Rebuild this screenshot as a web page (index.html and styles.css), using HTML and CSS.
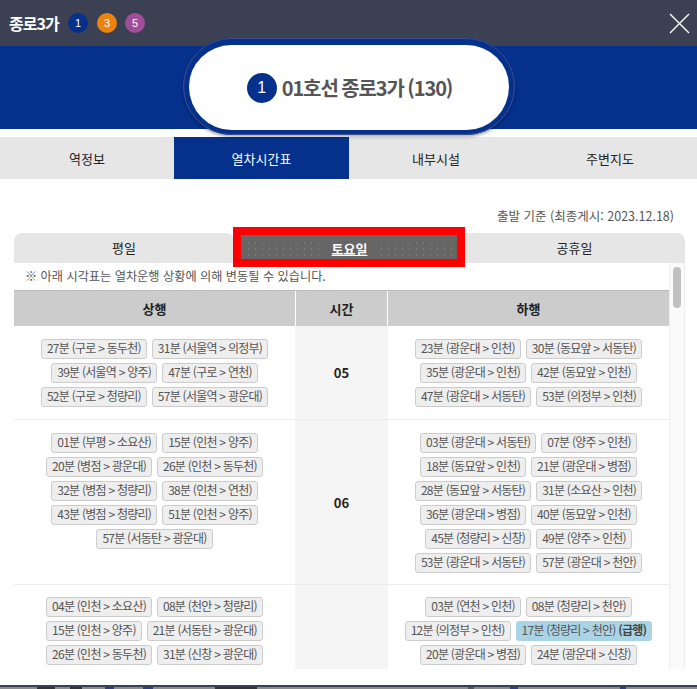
FILE: index.html
```html
<!DOCTYPE html>
<html lang="ko">

<head>
    <meta charset="UTF-8">
    <meta name="viewport" content="width=device-width, initial-scale=1.0">
    <title>종로3가</title>
    <link rel="stylesheet" href="styles.css">
</head>

<body>
    <div id="popup">
        <!-- Title bar -->
        <div id="title-bar">
            <h1 class="title">종로3가</h1>
            <span class="line-dot line1">1</span>
            <span class="line-dot line3">3</span>
            <span class="line-dot line5">5</span>
            <svg class="close" width="21" height="21" viewBox="0 0 21 21">
                <path d="M1 1L20 20M20 1L1 20" stroke="#fff" stroke-width="1.4" fill="none" />
            </svg>
        </div>

        <!-- Station name -->
        <div id="station-band">
            <div class="station-pill">
                <span class="pill-dot">1</span>
                <span class="pill-text">01호선 종로3가 (130)</span>
            </div>
        </div>

        <div id="main-tabs">
            <div class="main-tab">역정보</div>
            <div class="main-tab active">열차시간표</div>
            <div class="main-tab">내부시설</div>
            <div class="main-tab">주변지도</div>
        </div>

        <p class="base-date">출발 기준 (최종게시: 2023.12.18)</p>

        <div id="day-tabs">
            <div class="day-tab first">평일</div>
            <div class="day-tab selected"><div class="selected-inner"><span>토요일</span></div></div>
            <div class="day-tab last">공휴일</div>
        </div>

        <div id="timetable">
            <div class="scroll-area">
                <p class="notice">※ 아래 시각표는 열차운행 상황에 의해 변동될 수 있습니다.</p>

                <div class="table-head">
                    <div>상행</div>
                    <div>시간</div>
                    <div>하행</div>
                </div>

                <div class="hour-row">
                    <div class="trains">
                        <span class="chip">27분 (구로 &gt; 동두천)</span>
                        <span class="chip">31분 (서울역 &gt; 의정부)</span>
                        <span class="chip">39분 (서울역 &gt; 양주)</span>
                        <span class="chip">47분 (구로 &gt; 연천)</span>
                        <span class="chip">52분 (구로 &gt; 청량리)</span>
                        <span class="chip">57분 (서울역 &gt; 광운대)</span>
                    </div>
                    <div class="hour">05</div>
                    <div class="trains">
                        <span class="chip">23분 (광운대 &gt; 인천)</span>
                        <span class="chip">30분 (동묘앞 &gt; 서동탄)</span>
                        <span class="chip">35분 (광운대 &gt; 인천)</span>
                        <span class="chip">42분 (동묘앞 &gt; 인천)</span>
                        <span class="chip">47분 (광운대 &gt; 서동탄)</span>
                        <span class="chip">53분 (의정부 &gt; 인천)</span>
                    </div>
                </div>

                <div class="hour-row long">
                    <div class="trains">
                        <span class="chip">01분 (부평 &gt; 소요산)</span>
                        <span class="chip">15분 (인천 &gt; 양주)</span>
                        <span class="chip">20분 (병점 &gt; 광운대)</span>
                        <span class="chip">26분 (인천 &gt; 동두천)</span>
                        <span class="chip">32분 (병점 &gt; 청량리)</span>
                        <span class="chip">38분 (인천 &gt; 연천)</span>
                        <span class="chip">43분 (병점 &gt; 청량리)</span>
                        <span class="chip">51분 (인천 &gt; 양주)</span>
                        <span class="chip">57분 (서동탄 &gt; 광운대)</span>
                    </div>
                    <div class="hour">06</div>
                    <div class="trains">
                        <span class="chip">03분 (광운대 &gt; 서동탄)</span>
                        <span class="chip">07분 (양주 &gt; 인천)</span>
                        <span class="chip">18분 (동묘앞 &gt; 인천)</span>
                        <span class="chip">21분 (광운대 &gt; 병점)</span>
                        <span class="chip">28분 (동묘앞 &gt; 서동탄)</span>
                        <span class="chip">31분 (소요산 &gt; 인천)</span>
                        <span class="chip">36분 (광운대 &gt; 병점)</span>
                        <span class="chip">40분 (동묘앞 &gt; 인천)</span>
                        <span class="chip">45분 (청량리 &gt; 신창)</span>
                        <span class="chip">49분 (양주 &gt; 인천)</span>
                        <span class="chip">53분 (광운대 &gt; 서동탄)</span>
                        <span class="chip">57분 (광운대 &gt; 천안)</span>
                    </div>
                </div>

                <div class="hour-row last">
                    <div class="trains">
                        <span class="chip">04분 (인천 &gt; 소요산)</span>
                        <span class="chip">08분 (천안 &gt; 청량리)</span>
                        <span class="chip">15분 (인천 &gt; 양주)</span>
                        <span class="chip">21분 (서동탄 &gt; 광운대)</span>
                        <span class="chip">26분 (인천 &gt; 동두천)</span>
                        <span class="chip">31분 (신창 &gt; 광운대)</span>
                        <span class="chip">36분 (인천 &gt; 양주)</span>
                        <span class="chip">42분 (서동탄 &gt; 광운대)</span>
                    </div>
                    <div class="hour"></div>
                    <div class="trains">
                        <span class="chip">03분 (연천 &gt; 인천)</span>
                        <span class="chip">08분 (청량리 &gt; 천안)</span>
                        <span class="chip">12분 (의정부 &gt; 인천)</span>
                        <span class="chip express">17분 (청량리 &gt; 천안) <b>(급행)</b></span>
                        <span class="chip">20분 (광운대 &gt; 병점)</span>
                        <span class="chip">24분 (광운대 &gt; 신창)</span>
                        <span class="chip">29분 (광운대 &gt; 인천)</span>
                        <span class="chip">33분 (동묘앞 &gt; 서동탄)</span>
                    </div>
                </div>
            </div>
            <div class="scrollbar"><div class="thumb"></div></div>
        </div>
    </div>
    <div class="page-behind"></div>
</body>

</html>
```

FILE: styles.css
```css
html,
body {
    margin: 0;
    height: 689px;
    overflow: hidden;
}

body {
    font-family: "Noto Sans CJK KR", "Noto Sans", sans-serif;
    background-color: #8c8c8c;
}

#popup {
    box-sizing: border-box;
    width: 697px;
    height: 687px;
    border-bottom: 2px solid #3b4152;
    background-color: white;
    overflow: hidden;
}

#title-bar {
    height: 46px;
    padding-left: 9px;
    display: flex;
    align-items: center;
    background-color: #3b4152;
    color: white;
}

.title {
    width: 51px;
    margin: 0 8px 0 0;
    font-size: 16px;
    font-weight: 700;
    letter-spacing: -1px;
    white-space: nowrap;
}

.line-dot {
    width: 20px;
    height: 20px;
    margin-right: 8px;
    border-radius: 50%;
    display: flex;
    align-items: center;
    justify-content: center;
    font-family: "Liberation Sans", sans-serif;
    font-size: 11px;
}

.line1 {
    background-color: #05308c;
}

.line3 {
    background-color: #ea840f;
    margin-left: 1px;
}

.line5 {
    background-color: #a04f97;
}

.close {
    margin-left: auto;
    margin-right: 7px;
}

#station-band {
    height: 83px;
    background-color: #05308c;
    display: flex;
    justify-content: center;
}

.station-pill {
    box-sizing: border-box;
    width: 332px;
    height: 97px;
    margin-top: -8px;
    padding-left: 2px;
    border: 6px solid #05308c;
    border-top-width: 7px;
    border-bottom-width: 5px;
    outline: 1px solid #3d4f8c;
    outline-offset: -1px;
    border-radius: 49px;
    background-color: white;
    box-shadow: 0 2px 3px rgba(0, 0, 0, 0.3);
    display: flex;
    align-items: center;
    justify-content: center;
    gap: 5px;
    position: relative;
}

.pill-dot {
    width: 30px;
    height: 30px;
    border-radius: 50%;
    background-color: #05308c;
    color: white;
    display: flex;
    align-items: center;
    justify-content: center;
    font-family: "Liberation Sans", sans-serif;
    font-size: 16px;
}

.pill-text {
    color: #555;
    font-size: 20px;
    font-weight: 700;
    letter-spacing: -1.1px;
    word-spacing: -1px;
}

#main-tabs {
    margin-top: 8px;
    display: grid;
    grid-template-columns: 174px 175px 174px 174px;
    height: 42px;
    background-color: #e6e6e6;
}

.main-tab {
    display: flex;
    align-items: center;
    justify-content: center;
    font-size: 13px;
    color: #222;
}

.main-tab.active {
    background-color: #05308c;
    color: white;
}

.base-date {
    margin: 28px 23px 0 0;
    height: 18px;
    line-height: 18px;
    text-align: right;
    font-size: 12.5px;
    color: #555;
}

#day-tabs {
    margin: 8px 12px 0 14px;
    height: 30px;
    display: grid;
    grid-template-columns: 220px 230px 221px;
    grid-template-rows: 30px;
    font-size: 13px;
    color: #222;
}

.day-tab {
    display: flex;
    align-items: center;
    justify-content: center;
    padding-bottom: 2px;
    box-sizing: border-box;
    background-color: #e6e6e6;
}

.day-tab.first {
    border-top-left-radius: 8px;
    border-top-right-radius: 8px;
}

.day-tab.last {
    border-top-right-radius: 8px;
}

.day-tab.selected {
    position: relative;
    z-index: 1;
    box-sizing: border-box;
    width: 232px;
    height: 40px;
    margin: -6px 0 0 -1px;
    border: 8px solid #f00;
    padding: 0;
    background-color: #666;
}

.selected-inner {
    box-sizing: border-box;
    width: 100%;
    height: 100%;
    padding: 5px 3px 2px 4px;
    display: flex;
    align-items: center;
    justify-content: center;
    background: radial-gradient(circle, #7c7c7c 0.6px, transparent 0.9px) content-box;
    background-size: 7px 6px;
}

.selected-inner span {
    padding: 0 8px;
    background-color: #666;
    color: white;
    font-weight: 700;
    text-decoration: underline;
}

#timetable {
    margin: 0 12px 0 14px;
    height: 406px;
    display: flex;
    overflow: hidden;
}

.scroll-area {
    width: 655px;
    flex-shrink: 0;
}

.notice {
    margin: 0;
    height: 27px;
    padding-left: 11px;
    line-height: 26px;
    font-size: 12.2px;
    color: #555;
    white-space: nowrap;
}

.table-head,
.hour-row {
    display: grid;
    grid-template-columns: 281px 93px 281px;
}

.table-head {
    height: 36px;
    border-top: 1px solid #bbb;
    box-sizing: border-box;
    background-color: #ccc;
    font-size: 13px;
    font-weight: 700;
    color: #222;
}

.table-head div {
    display: flex;
    align-items: center;
    justify-content: center;
}

.table-head div:nth-child(2) {
    border-left: 1px solid white;
    border-right: 1px solid white;
}

.hour-row {
    border-bottom: 1px solid #ececec;
}

.trains {
    padding: 13px 12px 12px;
    display: flex;
    flex-wrap: wrap;
    justify-content: center;
    align-content: flex-start;
    gap: 4px 5px;
}

.hour-row.long .trains {
    padding-bottom: 11px;
}

.hour-row.last .trains {
    padding-top: 12px;
}

.hour {
    background-color: #f5f5f5;
    display: flex;
    align-items: center;
    justify-content: center;
    font-size: 13px;
    font-weight: 700;
    color: #222;
}

.chip {
    box-sizing: border-box;
    height: 20px;
    padding: 0 5px;
    border: 1px solid #ccc;
    border-radius: 3px;
    background-color: #eee;
    line-height: 16px;
    font-size: 12px;
    letter-spacing: -0.75px;
    color: #555;
    white-space: nowrap;
}

.chip.express {
    background-color: #aad4e6;
    border-color: #aad4e6;
}

.chip b {
    color: #444;
}

.scrollbar {
    flex: 1;
    background-color: #fafafa;
    border-left: 1px solid #eee;
    border-right: 1px solid #eee;
    padding: 4px 3px;
}

.thumb {
    height: 41px;
    border-radius: 4px;
    background-color: #c1c1c1;
}

/* bits of the page showing under the popup */
.page-behind {
    height: 2px;
    background: linear-gradient(to right,
            #8c8c8c 37px, #333 37px, #333 55px, #8c8c8c 55px,
            #8c8c8c 70px, #333 70px, #333 82px, #8c8c8c 82px,
            #8c8c8c 105px, #2c3f86 105px, #2c3f86 114px, #8c8c8c 114px,
            #8c8c8c 143px, #2c3f86 143px, #2c3f86 153px, #8c8c8c 153px,
            #8c8c8c 215px, #333 215px, #333 257px, #8c8c8c 257px,
            #8c8c8c 468px, #555 468px, #555 474px, #8c8c8c 474px,
            #8c8c8c 510px, #2c3f86 510px, #2c3f86 518px, #8c8c8c 518px,
            #8c8c8c 620px, #2c3f86 620px, #2c3f86 626px, #8c8c8c 626px);
}
```
